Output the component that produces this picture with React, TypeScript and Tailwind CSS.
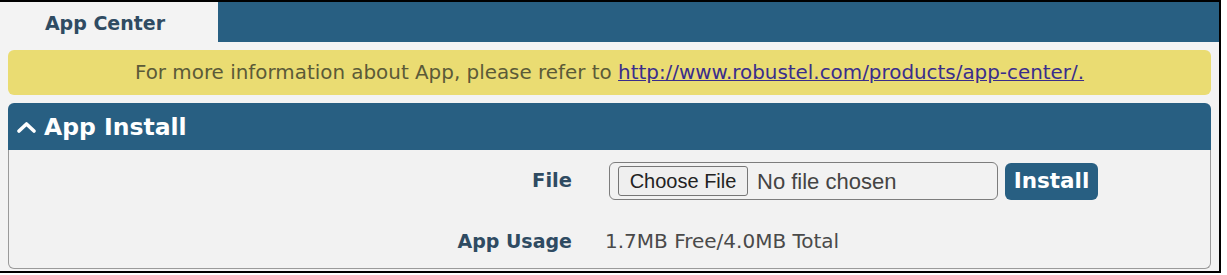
const sans = { fontFamily: '"Liberation Sans", Arial, sans-serif' };

export default function App() {
  return (
    <div className="flex w-[1227px] h-[275px] bg-white">
      <div className="w-[1221px] h-[273px] border-t-2 border-r-2 border-b-2 border-black bg-[#f3f3f3] flex flex-col font-['DejaVu_Sans',Verdana,sans-serif]">
        {/* tab bar */}
        <div className="flex h-[40px] shrink-0">
          <div className="w-[218px] bg-[#f3f3f3] rounded-tr-md flex items-center justify-center pr-[8px]">
            <span className="text-[19px] font-bold text-[#2f4b62] mt-[3px]">App Center</span>
          </div>
          <div className="flex-1 bg-[#285f82]" />
        </div>

        <div className="px-2 pt-2 flex flex-col gap-2">
          {/* info banner */}
          <div className="h-[45px] rounded-md bg-[#eadc72] flex items-center justify-center text-[19.9px] text-[#5b5a38]">
            <span>
              For more information about App, please refer to{" "}
              <a href="#" className="underline text-[#3a2d8c]">
                http://www.robustel.com/products/app-center/.
              </a>
            </span>
          </div>

          {/* panel */}
          <div className="flex flex-col">
            <div className="h-[47px] bg-[#285f82] rounded-t-md flex items-center gap-[8px] pl-[9px] text-white">
              <svg width="19" height="12" viewBox="0 0 19 12" className="mt-[1px]">
                <polyline points="2,10 9.5,3 17,10" fill="none" stroke="white" strokeWidth="3.6" strokeLinecap="round" strokeLinejoin="round" />
              </svg>
              <span className="text-[23.5px] font-bold mt-[3px]">App Install</span>
            </div>
            <div className="h-[119px] border border-t-0 border-[#9a9a9a] rounded-b-md bg-[#f2f2f2] pt-[12px]">
              <div className="flex items-center h-[38px]">
                <div className="w-[563px] text-right text-[19.5px] font-bold text-[#2f4b62]">File</div>
                <div className="ml-[37px] w-[389px] h-[38px] border border-[#7d7d7d] rounded-md flex items-center pl-[8px] gap-[9px]">
                  <div
                    className="h-[30px] w-[130px] border border-[#767676] rounded-[3px] bg-[#efefef] flex items-center justify-center text-[20px] text-[#222]"
                    style={sans}
                  >
                    Choose File
                  </div>
                  <span className="text-[22px] text-[#444]" style={sans}>
                    No file chosen
                  </span>
                </div>
                <button className="ml-[7px] h-[37px] w-[93px] rounded-md bg-[#285f82] text-white font-bold text-[21.5px]">
                  Install
                </button>
              </div>
              <div className="flex items-center h-[38px] mt-[22px]">
                <div className="w-[563px] text-right text-[19px] font-bold text-[#2f4b62]">App Usage</div>
                <div className="ml-[33px] text-[20px] text-[#4a4a4a]">1.7MB Free/4.0MB Total</div>
              </div>
            </div>
          </div>
        </div>
      </div>
    </div>
  );
}
